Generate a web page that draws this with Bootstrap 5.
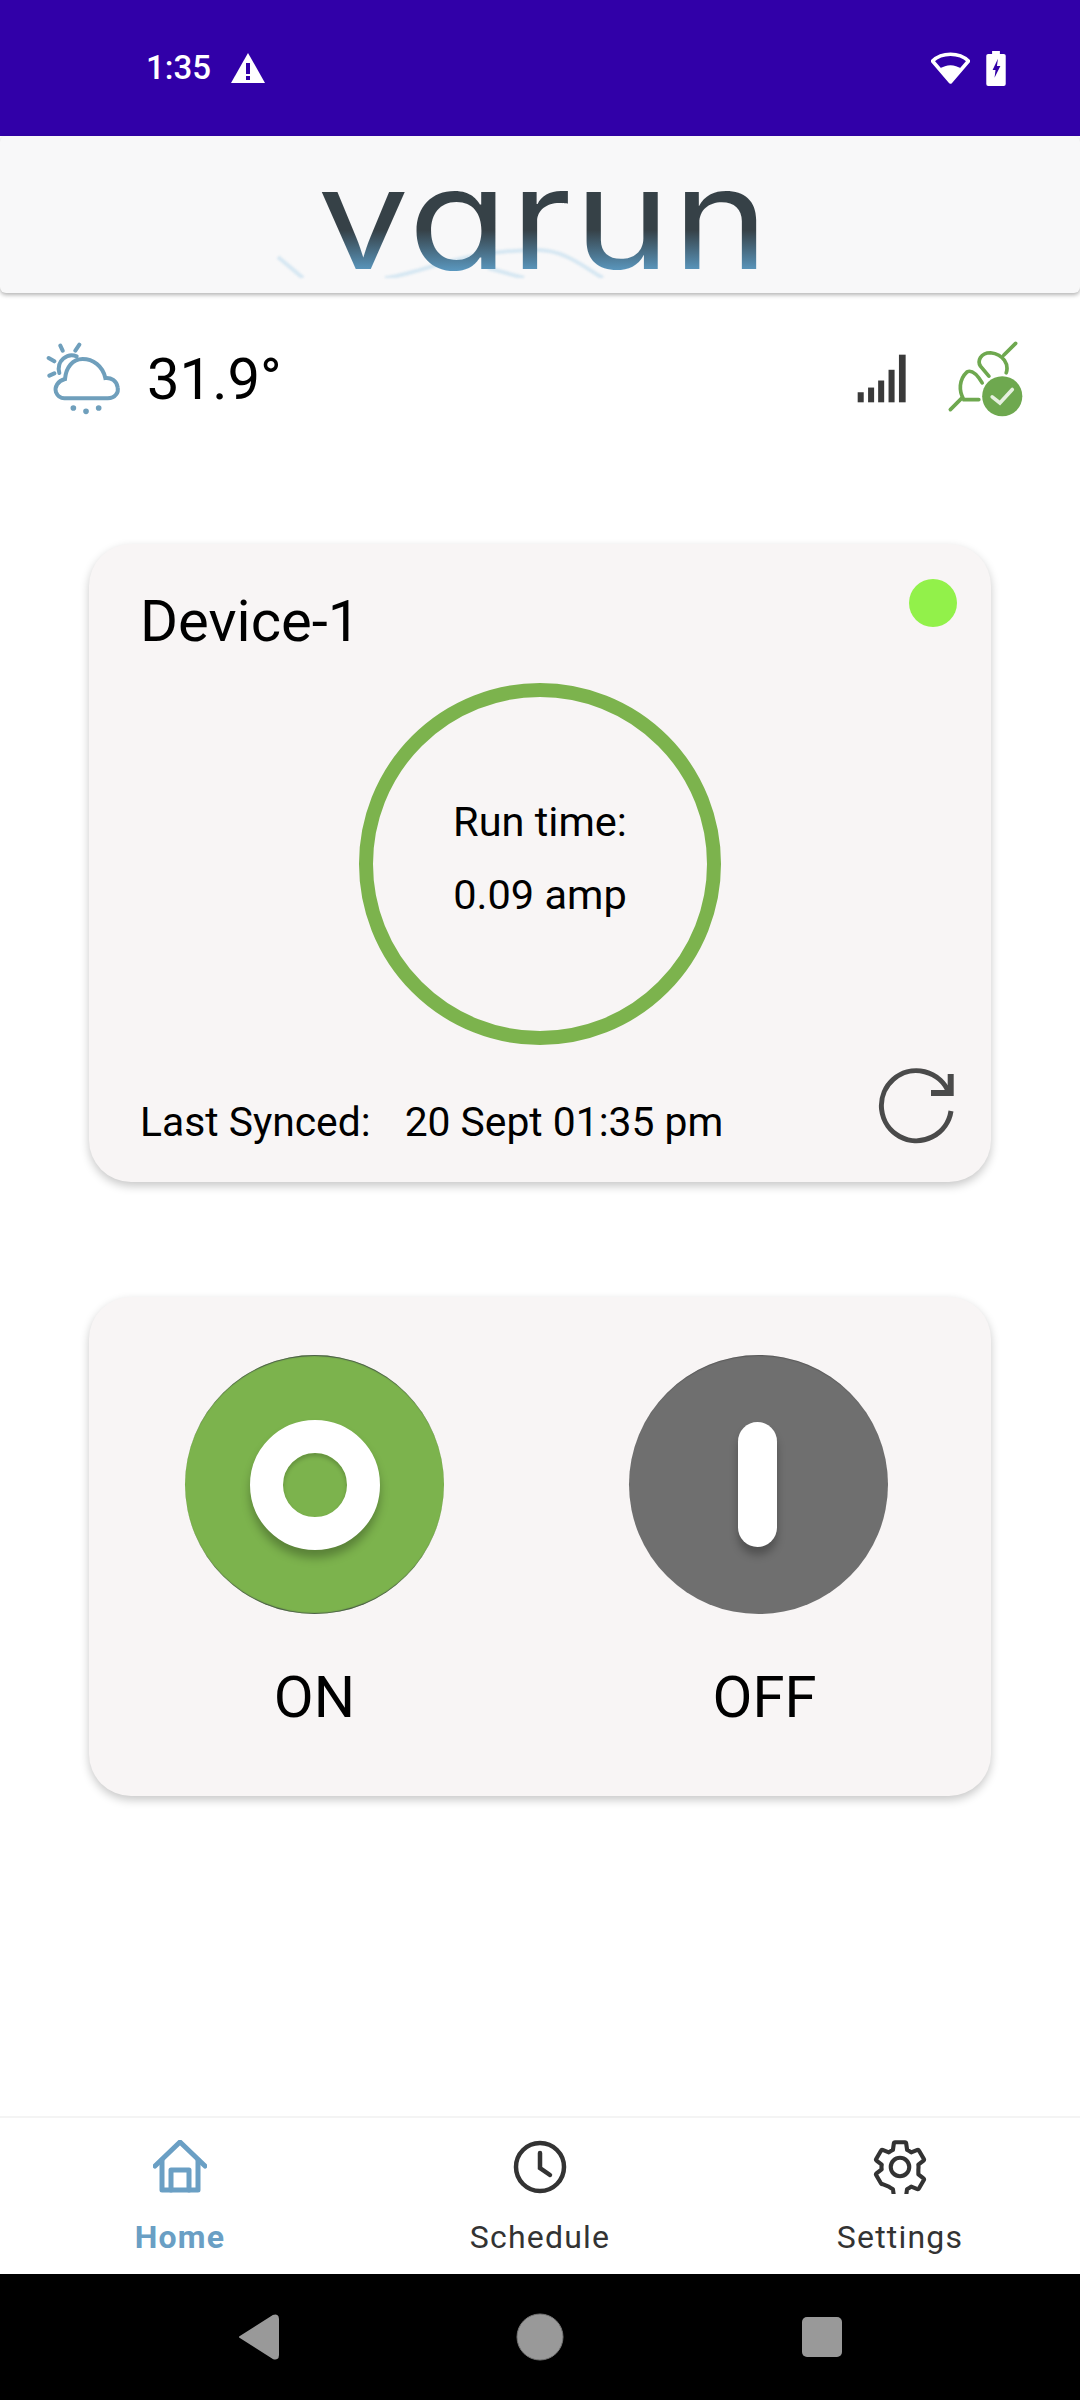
<!doctype html>
<html lang="en">
<head>
<meta charset="utf-8">
<title>Varun</title>
<link rel="stylesheet" href="https://cdn.jsdelivr.net/npm/bootstrap@5.3.0/dist/css/bootstrap.min.css">
<style>
html,body{margin:0;background:#fff}
body{width:1080px;height:2400px;font-family:Roboto,"Liberation Sans",sans-serif;color:#000;overflow:hidden}
.shell{height:2400px}
.statusbar{height:136px;background:#3100a8;color:#fff;padding:0 74px 0 146px;font-size:33px;font-weight:500}
.warn-gap{gap:19px}
.appbar{height:157px;background:#f8f8f9;border-radius:6px;box-shadow:0 2px 4px rgba(0,0,0,.3);position:relative}
.logo-text{display:inline-block;font-family:Inter,sans-serif;font-feature-settings:"cv11" 1;font-weight:400;font-size:141px;line-height:150px;height:150px;margin:7px 0 0 8px;letter-spacing:2px;position:relative;transform:scaleX(1.155);background:linear-gradient(180deg,#364147 87px,#5c9cc5 130px);-webkit-background-clip:text;background-clip:text;color:transparent}
.logo-wave{position:absolute;left:270px;top:100px;filter:blur(1px)}
.soft{filter:blur(.5px)}
.weather{height:108px;margin-top:32px;padding:0 56px 0 46px}
.temp{font-size:58px;line-height:1;margin-left:26px}
.sig{margin-right:39px}
.panel{width:902px;margin-left:89px;background:#f8f5f5;border-radius:42px;box-shadow:0 4px 10px rgba(0,0,0,.22);border:0}
.panel-a{height:638px;margin-top:111px;padding:45px 34px 0 51px;position:relative}
.dev-name{font-size:58px;line-height:64px}
.dot-live{position:absolute;width:48px;height:48px;top:35px;right:34px;background:#92f14a;border-radius:50%}
.gauge{width:362px;height:362px;border:14px solid #7cb34d;border-radius:50%;margin:30px auto 0 auto;position:relative;left:-8.5px;font-size:41.5px;line-height:73px;padding-top:88px}
.sync{font-size:40.8px;line-height:48px;margin-top:53px}
.sync-val{margin-left:34px}
.refresh{position:absolute;right:35px;bottom:35px}
.panel-b{height:499px;margin-top:115px;padding-top:58px}
.toggle-col{width:259px;position:relative}
.toggle{width:259px;height:259px;border-radius:50%;box-shadow:inset 0 2px 1px -1px rgba(50,50,70,.7),inset 0 -2px 1px -1px rgba(50,50,70,.7)}
.toggle-on{background:#7cb34d}
.toggle-off{background:#6f6f6f;box-shadow:inset 0 2px 1px -1px rgba(40,40,40,.3)}
.ring{width:130px;height:130px;border-radius:50%;border:33px solid #fff;box-shadow:0 8px 10px rgba(0,0,0,.28),inset 0 3px 4px rgba(0,0,0,.2);background:#7cb34d}
.pill{width:39px;height:125px;border-radius:20px;background:#fff;box-shadow:0 8px 9px rgba(0,0,0,.28);margin-left:-2px}
.toggle-label{font-size:58px;line-height:64px;margin-top:51px}
.off-label{position:relative;left:6px}
.toggle-pair{padding-left:96px;gap:185px}
.tabbar{height:158px;background:#fff;border-top:2px solid #f4f4f4}
.tab-item{padding-top:22px;font-size:32px;letter-spacing:1.2px;line-height:40px;color:#333}
.tab-item svg{display:block;margin-bottom:23px}
.tab-on{color:#6a9fc4;font-weight:700}
.sysnav{height:126px;background:#000}
.sys-wrap{width:606px;margin-left:237px}
</style>
</head>
<body>
<div class="shell d-flex flex-column">
  <div class="statusbar d-flex align-items-center justify-content-between">
    <div class="d-flex align-items-center warn-gap">
      <span>1:35</span>
      <svg width="36" height="32" viewBox="0 0 36 32"><path d="M18 1 L35 31 H1 Z" fill="#fff"/><rect x="16" y="11" width="4" height="11" fill="#3100a8"/><rect x="16" y="24" width="4" height="4" fill="#3100a8"/></svg>
    </div>
    <div class="d-flex align-items-center gap-3">
      <svg width="39" height="32" viewBox="0 0 39 32"><path d="M19.5 30 L1.5 9 C11 0 28 0 37.5 9 Z" fill="none" stroke="#fff" stroke-width="3.5" stroke-linejoin="round"/><path d="M19.5 29 L9 17 C15 12 24 12 30 17 Z" fill="#fff"/></svg>
      <svg width="20" height="35" viewBox="0 0 20 36"><path d="M6 0 H14 V3 H18 Q20 3 20 5 V34 Q20 36 18 36 H2 Q0 36 0 34 V5 Q0 3 2 3 H6 Z" fill="#fff"/><path d="M12 8 L6.5 19.5 H9.5 L8.5 27.5 L14.5 15.5 H11 Z" fill="#3100a8"/></svg>
    </div>
  </div>
  <div class="appbar text-center">
    <svg class="logo-wave" width="540" height="42" viewBox="0 0 540 42" fill="none" stroke="#d6e7f2" stroke-width="4"><path d="M8 21 L33 42"/><path d="M115 42 C150 38 190 14 268 14 C295 14 315 32 333 42"/><path d="M218 32 L254 42"/></svg>
    <div class="logo-text">varun</div>
  </div>
  <div class="weather d-flex align-items-center">
    <svg class="soft" width="75" height="74" viewBox="140 90 225 220" fill="none" stroke="#6f9fbc" stroke-width="12" stroke-linecap="round"><path d="M195 258 H325 C350 258 358 238 355 225 C352 205 335 195 318 197 C310 160 280 140 250 140 C220 140 200 165 197 200 C175 205 165 225 170 240 C175 252 185 258 195 258Z"/><path d="M232 132 C205 120 170 145 180 182"/><path d="M183 100 L190 115M240 97 L228 115M148 137 L165 147M150 190 L165 183"/><path d="M222 287h.1M260 297h.1M298 287h.1" stroke-width="17"/></svg>
    <span class="temp">31.9°</span>
    <svg class="ms-auto sig soft" width="52" height="52" viewBox="110 95 155 155" fill="#3a3a3a"><rect x="115" y="212" width="18" height="30"/><rect x="146" y="198" width="18" height="44"/><rect x="176" y="177" width="18" height="65"/><rect x="207" y="145" width="18" height="97"/><rect x="238" y="100" width="20" height="142"/></svg>
    <svg class="soft" width="77" height="77" viewBox="380 65 230 230" fill="none" stroke="#6ea84f" stroke-width="11" stroke-linecap="round"><path d="M390 270 L425 235M475 240 H430 C415 215 415 180 440 157 C455 150 470 165 485 190"/><path d="M585 72 L550 107M557 160 C565 135 550 105 510 100 C480 100 470 125 480 140 L505 170"/><circle cx="545" cy="230" r="60" fill="#6ea84f" stroke="none"/><path d="M515 232 L538 250 L575 210" stroke="#e6f0df"/></svg>
  </div>
  <div class="card panel panel-a">
    <div class="dev-name">Device-1</div>
    <span class="dot-live"></span>
    <div class="gauge text-center"><div>Run time:</div><div>0.09 amp</div></div>
    <div class="sync"><span>Last Synced:</span><span class="sync-val">20 Sept 01:35 pm</span></div>
    <svg class="refresh soft" width="80" height="80" viewBox="0 0 80 80" fill="none" stroke="#4a4a4a" stroke-width="5"><path d="M75 44 A35 35 0 1 1 73 26"/><path d="M74.7 7 V26 H55" stroke-width="6"/></svg>
  </div>
  <div class="card panel panel-b">
    <div class="d-flex toggle-pair">
      <div class="toggle-col text-center">
        <div class="toggle toggle-on d-flex align-items-center justify-content-center"><div class="ring"></div></div>
        <div class="toggle-label">ON</div>
      </div>
      <div class="toggle-col text-center">
        <div class="toggle toggle-off d-flex align-items-center justify-content-center"><div class="pill"></div></div>
        <div class="toggle-label off-label">OFF</div>
      </div>
    </div>
  </div>
  <div class="flex-grow-1"></div>
  <div class="tabbar row g-0 text-center">
    <div class="col-4 tab-item tab-on d-flex flex-column align-items-center">
      <svg class="soft" width="54" height="54" viewBox="0 0 54 54" fill="none" stroke="#6a9fc4" stroke-width="5" stroke-linejoin="round" stroke-linecap="round"><path d="M2 26 L27 2 L52 26"/><path d="M9 20 V50 H45 V20"/><path d="M18 50 V30 H36 V50"/></svg>
      <span>Home</span>
    </div>
    <div class="col-4 tab-item d-flex flex-column align-items-center">
      <svg class="soft" width="54" height="54" viewBox="0 0 54 54" fill="none" stroke="#333" stroke-width="4.5" stroke-linecap="round"><circle cx="27" cy="27" r="24"/><path d="M27 13 V28 L37 35"/></svg>
      <span>Schedule</span>
    </div>
    <div class="col-4 tab-item d-flex flex-column align-items-center">
      <svg class="soft" width="54" height="54" viewBox="1.5 1.5 21 21" fill="none" stroke="#333" stroke-width="1.6" stroke-linejoin="round"><path d="M19.14 12.94c.04-.3.06-.61.06-.94 0-.32-.02-.64-.07-.94l2.03-1.58c.18-.14.23-.41.12-.61l-1.92-3.32c-.12-.22-.37-.29-.59-.22l-2.39.96c-.5-.38-1.03-.7-1.62-.94l-.36-2.54c-.04-.24-.24-.41-.48-.41h-3.84c-.24 0-.43.17-.47.41l-.36 2.54c-.59.24-1.13.57-1.62.94l-2.39-.96c-.22-.08-.47 0-.59.22L2.74 8.87c-.12.21-.08.47.12.61l2.03 1.58c-.05.3-.09.63-.09.94s.02.64.07.94l-2.03 1.58c-.18.14-.23.41-.12.61l1.92 3.32c.12.22.37.29.59.22l2.39.96c.5.38 1.03.7 1.62.94l.36 2.54c.05.24.24.41.48.41h3.84c.24 0 .44-.17.47-.41l.36-2.54c.59-.24 1.13-.56 1.62-.94l2.39.96c.22.08.47 0 .59-.22l1.92-3.32c.12-.22.07-.47-.12-.61l-2.01-1.58zM12 15.6c-1.98 0-3.6-1.62-3.6-3.6s1.62-3.6 3.6-3.6 3.6 1.62 3.6 3.6-1.62 3.6-3.6 3.6z"/></svg>
      <span>Settings</span>
    </div>
  </div>
  <div class="sysnav d-flex align-items-center">
    <div class="sys-wrap d-flex align-items-center justify-content-between">
      <svg width="42" height="46" viewBox="0 0 42 46"><path d="M3 23 L36 2 Q41 0 41 5 V41 Q41 46 36 44 Z" fill="#999" stroke="#999" stroke-width="2" stroke-linejoin="round"/></svg>
      <svg width="48" height="48" viewBox="0 0 48 48"><circle cx="24" cy="24" r="23" fill="#999" stroke="#777" stroke-width="1"/></svg>
      <svg width="42" height="42" viewBox="0 0 42 42"><rect x="1" y="1" width="40" height="40" rx="5" fill="#999"/></svg>
    </div>
  </div>
</div>
</body>
</html>
